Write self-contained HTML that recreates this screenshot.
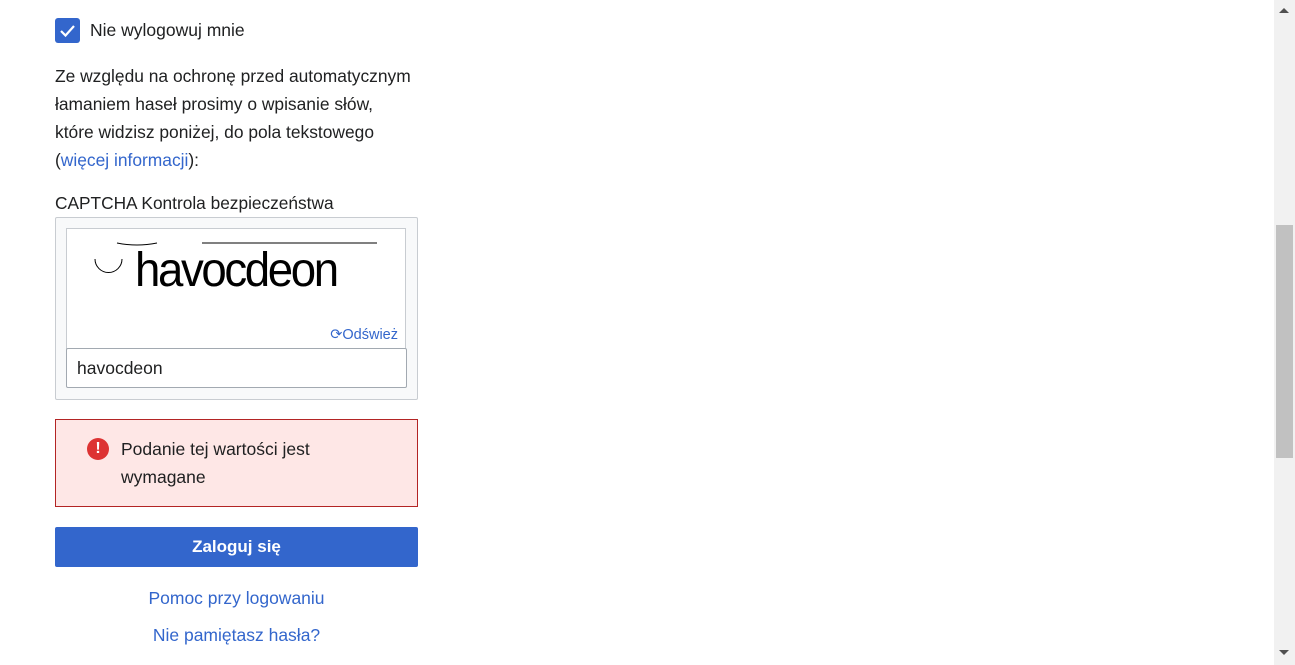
<!DOCTYPE html>
<html><head><meta charset="utf-8"><style>
body{margin:0;width:1295px;height:665px;overflow:hidden;background:#fff;font-family:"Liberation Sans",sans-serif;color:#202122;font-size:16px;position:relative}
.a{position:absolute}
a{color:#3366cc;text-decoration:none}
</style></head><body>
<div class="a" style="left:55px;top:18px;width:25px;height:25px;background:#3366cc;border-radius:3px">
<svg width="25" height="25"><path d="M6 13 L10.5 17.5 L19 8" stroke="#fff" stroke-width="2.2" fill="none"/></svg></div>
<div class="a" style="left:90px;top:20px;font-size:17.5px">Nie wylogowuj mnie</div>
<div class="a" style="left:55px;top:62px;line-height:28px;font-size:17.4px">Ze względu na ochronę przed automatycznym<br>łamaniem haseł prosimy o wpisanie słów,<br>które widzisz poniżej, do pola tekstowego<br>(<a>więcej informacji</a>):</div>
<div class="a" style="left:55px;top:193px;font-size:17.3px">CAPTCHA Kontrola bezpieczeństwa</div>
<div class="a" style="left:55px;top:217px;width:361px;height:181px;background:#f8f9fa;border:1px solid #c8ccd1;border-radius:2px"></div>
<div class="a" style="left:66px;top:228px;width:338px;height:120px;background:#fff;border:1px solid #c8ccd1;border-bottom:none">
<svg width="338" height="70" class="a" style="left:0;top:0"><path d="M50 14 Q70 18 90 14 M135 14 H310" stroke="#000" fill="none"/><path d="M28 30 A13 13 0 0 0 55 30" stroke="#000" fill="none"/></svg>
<div class="a" style="left:68px;top:14px;font-size:48px;letter-spacing:-2.5px;transform:scaleX(.95);transform-origin:left;color:#000">havocdeon</div>
<div class="a" style="right:7px;top:98px;font-size:14.5px;color:#3366cc">⟳Odśwież</div></div>
<div class="a" style="left:66px;top:348px;width:339px;height:38px;border:1px solid #a2a9b1;border-radius:2px;background:#fff"></div>
<div class="a" style="left:77px;top:358px;font-size:17.5px">havocdeon</div>
<div class="a" style="left:55px;top:419px;width:361px;height:86px;background:#fee7e6;border:1px solid #b32424"></div>
<div class="a" style="left:87px;top:438px;width:22px;height:22px;border-radius:50%;background:#d33;color:#fff;font-weight:bold;text-align:center;line-height:22px;font-size:16px">!</div>
<div class="a" style="left:121px;top:435px;line-height:28px;font-size:17.5px">Podanie tej wartości jest<br>wymagane</div>
<div class="a" style="left:55px;top:527px;width:363px;height:40px;background:#3366cc;border-radius:2px;color:#fff;font-weight:bold;text-align:center;line-height:40px;font-size:17px">Zaloguj się</div>
<div class="a" style="left:55px;top:588px;width:363px;text-align:center;font-size:17.5px"><a>Pomoc przy logowaniu</a></div>
<div class="a" style="left:55px;top:625px;width:363px;text-align:center;font-size:17.5px"><a>Nie pamiętasz hasła?</a></div>
<div class="a" style="left:1274px;top:0;width:21px;height:665px;background:#f1f1f1"></div>
<div class="a" style="left:1276px;top:225px;width:17px;height:233px;background:#c1c1c1"></div>
<div class="a" style="left:1279px;top:8px;width:0;height:0;border:5px solid transparent;border-bottom-color:#505050;border-top:none"></div>
<div class="a" style="left:1279px;top:650px;width:0;height:0;border:5px solid transparent;border-top-color:#505050;border-bottom:none"></div>
</body></html>
